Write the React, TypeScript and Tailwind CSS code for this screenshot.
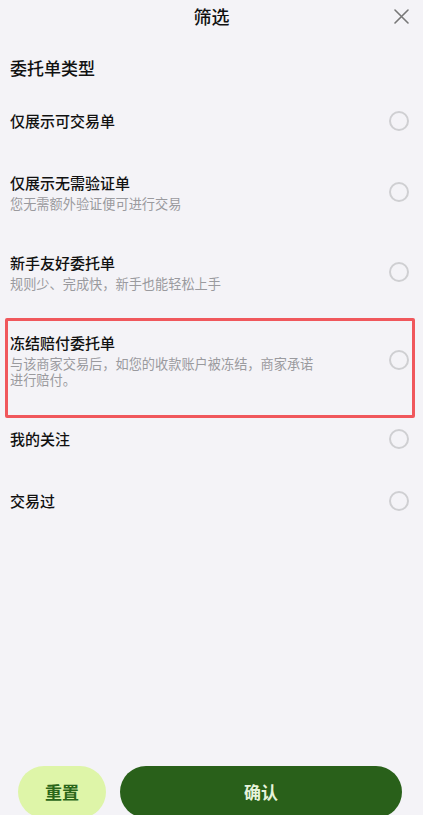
import React, { useState } from 'react';

type Option = {
  id: string;
  title: string;
  desc?: string;
  marked?: boolean;
};

const OPTIONS: Option[] = [
  { id: 'tradable', title: '仅展示可交易单' },
  { id: 'no-verify', title: '仅展示无需验证单', desc: '您无需额外验证便可进行交易' },
  { id: 'newbie', title: '新手友好委托单', desc: '规则少、完成快，新手也能轻松上手' },
  {
    id: 'freeze',
    title: '冻结赔付委托单',
    desc: '与该商家交易后，如您的收款账户被冻结，商家承诺进行赔付。',
    marked: true,
  },
  { id: 'following', title: '我的关注' },
  { id: 'traded', title: '交易过' },
];

function Radio({ checked }: { checked: boolean }) {
  return (
    <span
      className={
        checked
          ? 'w-5 h-5 rounded-full border-[6px] border-[#29601a] shrink-0'
          : 'w-5 h-5 rounded-full border-[2px] border-[#cfcfd2] shrink-0'
      }
    />
  );
}

function OptionRow({
  option,
  checked,
  onToggle,
}: {
  option: Option;
  checked: boolean;
  onToggle: () => void;
}) {
  return (
    <div className="relative flex items-center py-5 pl-[10px] pr-[14px] cursor-pointer" onClick={onToggle}>
      <div className="flex-1 min-w-0">
        <div className="text-[15px] leading-[22px] font-medium text-[#111]">{option.title}</div>
        {option.desc && (
          <div className="mt-[2px] w-[312px] text-[13.2px] leading-4 text-[#9a9a9e]">{option.desc}</div>
        )}
      </div>
      <Radio checked={checked} />
      {/* highlight frame */}
      {option.marked && (
        <div className="absolute left-[5px] right-[8px] top-[6px] bottom-[-10px] border-[3px] border-[#f0575c] rounded-[2px] pointer-events-none" />
      )}
    </div>
  );
}

export default function App() {
  const [selected, setSelected] = useState<Record<string, boolean>>({});

  return (
    <div
      className="h-[815px] overflow-hidden flex flex-col bg-[#f4f3f7]"
      style={{ fontFamily: '"Noto Sans CJK SC", "Noto Sans", sans-serif' }}
    >
      {/* top bar */}
      <div className="relative h-8 flex items-center justify-center shrink-0">
        <span className="text-[18px] leading-6 font-medium text-[#111]">筛选</span>
        <button className="absolute right-[14px] top-[8px] w-4 h-4 flex items-center justify-center text-[#777]">
          <svg width="15" height="15" viewBox="0 0 15 15" fill="none" stroke="currentColor" strokeWidth="1.6" strokeLinecap="round">
            <path d="M1 1L14 14M14 1L1 14" />
          </svg>
        </button>
      </div>

      <div className="pt-6 pb-[10px] pl-[10px] text-[17px] leading-6 font-medium text-[#111] shrink-0">委托单类型</div>

      <div className="flex flex-col">
        {OPTIONS.map((o) => (
          <OptionRow
            key={o.id}
            option={o}
            checked={!!selected[o.id]}
            onToggle={() => setSelected((s) => ({ ...s, [o.id]: !s[o.id] }))}
          />
        ))}
      </div>

      <div className="flex-1" />

      {/* footer actions */}
      <div className="flex items-center gap-[14px] pl-[18px] pr-[21px] -mb-[3px] shrink-0">
        <button
          className="w-[88px] h-[52px] rounded-full bg-[#def5a8] text-[#2a6619] text-[17px] font-bold"
          onClick={() => setSelected({})}
        >
          重置
        </button>
        <button className="flex-1 h-[52px] rounded-full bg-[#29601a] text-[#e6f3dc] text-[17px] font-bold">
          确认
        </button>
      </div>
    </div>
  );
}
